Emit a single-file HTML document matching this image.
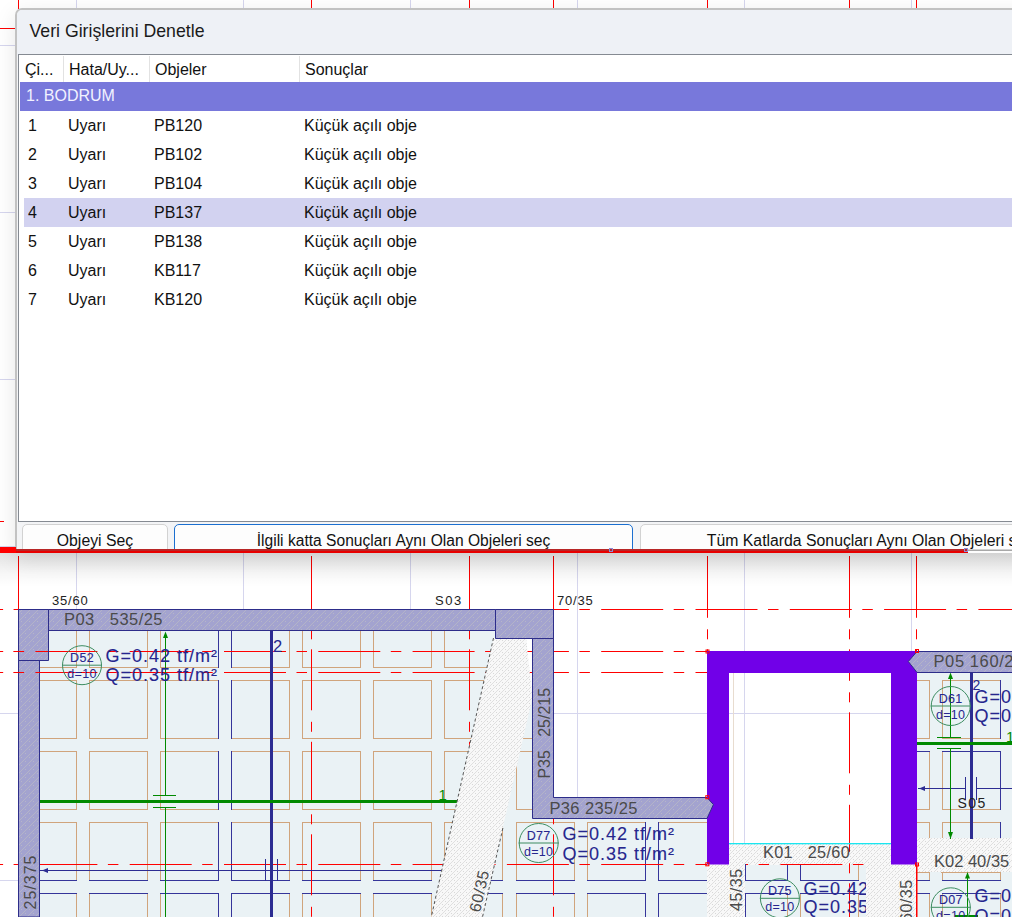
<!DOCTYPE html>
<html><head><meta charset="utf-8">
<style>
html,body{margin:0;padding:0;}
body{width:1012px;height:917px;overflow:hidden;position:relative;background:#fff;font-family:"Liberation Sans", sans-serif;}
svg text{font-family:"Liberation Sans", sans-serif;}
#shadowL{position:absolute;left:0;top:8px;width:15px;height:540px;background:linear-gradient(to right,rgba(0,0,0,0),rgba(0,0,0,0.035));}
#shadowB{position:absolute;left:0;top:553px;width:1012px;height:34px;background:linear-gradient(to bottom,rgba(0,0,0,0.11),rgba(0,0,0,0.03) 60%,rgba(0,0,0,0));}
#dlg{position:absolute;left:15px;top:8px;width:1200px;height:545px;background:#f3f4f6;border-left:2px solid #c2c2c2;border-top:2px solid #c2c2c2;border-top-left-radius:7px;box-sizing:border-box;overflow:hidden;box-shadow:0 6px 22px rgba(0,0,0,0.10);}
#title{position:absolute;left:0;top:0;right:0;height:46px;background:#eef1f6;}
#title span{position:absolute;left:12.5px;top:11px;font-size:17.7px;color:#1b1b1b;white-space:nowrap;}
#grid{position:absolute;left:1px;top:44px;width:1300px;height:468px;background:#fff;border:1px solid #858a92;box-sizing:border-box;}
.hdr{position:absolute;left:0;top:0;height:27px;width:100%;}
.hdr span,.row span{position:absolute;top:6px;font-size:16px;color:#111;white-space:nowrap;}
.sep{position:absolute;top:1px;width:1px;height:26px;background:#e2e2e2;}
.grp{position:absolute;left:1px;top:27px;height:29px;width:100%;background:#7878db;}
.grp span{position:absolute;left:6px;top:5px;font-size:16px;color:#f2f2ff;white-space:nowrap;}
.row{position:absolute;left:5px;height:29px;width:100%;}
.row.sel{background:#d2d2f0;}
.btn{position:absolute;top:514px;height:41px;background:#fdfdfd;border:1px solid #d2d2d2;border-radius:5px;box-sizing:border-box;font-size:15.8px;color:#111;text-align:center;white-space:nowrap;}
.btn span{position:absolute;left:0;right:0;top:7px;}
.btn.focus{border:1px solid #1b6fd0;}
</style></head><body>
<svg width="1012" height="917" viewBox="0 0 1012 917" style="position:absolute;left:0;top:0">
<defs>
<pattern id="wh" patternUnits="userSpaceOnUse" width="8" height="8"><rect width="8" height="8" fill="#a3a3cf"/><path d="M-1,9 L9,-1 M-1,1 L1,-1 M7,9 L9,7" stroke="#b9b9c6" stroke-width="0.9" opacity="0.85"/><rect x="1" y="1" width="1" height="1" fill="#b6b6c8"/><rect x="5" y="5" width="1" height="1" fill="#b6b6c8"/></pattern>
<pattern id="gh" patternUnits="userSpaceOnUse" width="6" height="6"><rect width="6" height="6" fill="#f8f8f8"/><path d="M-1,7 L7,-1 M-1,1 L1,-1 M5,7 L7,5" stroke="#d4d4d4" stroke-width="0.7"/><rect x="1" y="1" width="1" height="1" fill="#d8d8d8"/><rect x="4" y="4" width="1" height="1" fill="#d8d8d8"/></pattern>
<clipPath id="cA"><polygon points="40,631 495,631 495,639 533,639 533,819 707,819 707,917 40,917"/></clipPath>
<clipPath id="cB"><rect x="917" y="673" width="95" height="166"/></clipPath>
<clipPath id="cC"><rect x="745" y="865" width="121" height="52"/></clipPath>
<clipPath id="cC2"><rect x="745" y="865" width="121" height="52"/></clipPath>
<clipPath id="cD"><rect x="917" y="872" width="95" height="45"/></clipPath>
</defs>
<rect width="1012" height="917" fill="#fff"/>
<rect x="76" y="0" width="1" height="917" fill="#d6d6ee"/>
<rect x="243" y="0" width="1" height="917" fill="#d6d6ee"/>
<rect x="410" y="0" width="1" height="917" fill="#d6d6ee"/>
<rect x="577" y="0" width="1" height="917" fill="#d6d6ee"/>
<rect x="744" y="0" width="1" height="917" fill="#d6d6ee"/>
<rect x="911" y="0" width="1" height="917" fill="#d6d6ee"/>
<rect x="0" y="45" width="1012" height="1" fill="#d6d6ee"/>
<rect x="0" y="212" width="1012" height="1" fill="#d6d6ee"/>
<rect x="0" y="379" width="1012" height="1" fill="#d6d6ee"/>
<rect x="0" y="546" width="1012" height="1" fill="#d6d6ee"/>
<rect x="0" y="713" width="1012" height="1" fill="#d6d6ee"/>
<rect x="0" y="880" width="1012" height="1" fill="#d6d6ee"/>
<rect x="18" y="0" width="1" height="9" fill="#ff0000"/>
<rect x="18" y="556" width="1" height="53" fill="#ff0000"/>
<rect x="311" y="0" width="1" height="9" fill="#ff0000"/>
<rect x="311" y="556" width="1" height="53" fill="#ff0000"/>
<rect x="469" y="0" width="1" height="9" fill="#ff0000"/>
<rect x="469" y="556" width="1" height="53" fill="#ff0000"/>
<rect x="553" y="0" width="1" height="9" fill="#ff0000"/>
<rect x="553" y="556" width="1" height="53" fill="#ff0000"/>
<rect x="707" y="0" width="1" height="9" fill="#ff0000"/>
<rect x="707" y="556" width="1" height="53" fill="#ff0000"/>
<rect x="849" y="0" width="1" height="9" fill="#ff0000"/>
<rect x="849" y="556" width="1" height="53" fill="#ff0000"/>
<rect x="916" y="0" width="1" height="9" fill="#ff0000"/>
<rect x="916" y="556" width="1" height="53" fill="#ff0000"/>
<rect x="0" y="28" width="16" height="1" fill="#ff0000"/>
<rect x="0" y="521" width="4" height="1" fill="#ff0000"/>
<g clip-path="url(#cA)">
<rect x="40" y="630" width="667" height="287" fill="#eaf2f5"/>
<path d="M18,609.5H77M18,667.5H77M18.5,609V668M76.5,609V668M18,680.5H77M18,738.5H77M18.5,680V739M76.5,680V739M18,751.5H77M18,809.5H77M18.5,751V810M76.5,751V810M18,822.5H77M18.5,822V881M76.5,822V881M18,951.5H77M18.5,893V952M76.5,893V952M89,609.5H148M89,667.5H148M89.5,609V668M147.5,609V668M89,680.5H148M89,738.5H148M89.5,680V739M147.5,680V739M89,751.5H148M89,809.5H148M89.5,751V810M147.5,751V810M89,822.5H148M89.5,822V881M147.5,822V881M89,951.5H148M89.5,893V952M147.5,893V952M160,609.5H219M160,667.5H219M160.5,609V668M160,680.5H219M160,738.5H219M160.5,680V739M160,751.5H219M160,809.5H219M160.5,751V810M160,822.5H219M160.5,822V881M160,951.5H219M160.5,893V952M231,609.5H290M231,667.5H290M289.5,609V668M231,680.5H290M231,738.5H290M289.5,680V739M231,751.5H290M231,809.5H290M289.5,751V810M231,822.5H290M289.5,822V881M231,951.5H290M289.5,893V952M302,609.5H361M302,667.5H361M302.5,609V668M360.5,609V668M302,680.5H361M302,738.5H361M302.5,680V739M360.5,680V739M302,751.5H361M302,809.5H361M302.5,751V810M360.5,751V810M302,822.5H361M302.5,822V881M360.5,822V881M302,951.5H361M302.5,893V952M360.5,893V952M373,609.5H432M373,667.5H432M373.5,609V668M431.5,609V668M373,680.5H432M373,738.5H432M373.5,680V739M431.5,680V739M373,751.5H432M373,809.5H432M373.5,751V810M431.5,751V810M373,822.5H432M373.5,822V881M431.5,822V881M373,951.5H432M373.5,893V952M431.5,893V952M444,609.5H503M444,667.5H503M444.5,609V668M502.5,609V668M444,680.5H503M444,738.5H503M444.5,680V739M502.5,680V739M444,751.5H503M444,809.5H503M444.5,751V810M502.5,751V810M444,822.5H503M444.5,822V881M502.5,822V881M444,951.5H503M444.5,893V952M502.5,893V952M516,609.5H575M516,667.5H575M516.5,609V668M574.5,609V668M516,680.5H575M516,738.5H575M516.5,680V739M574.5,680V739M516,751.5H575M516,809.5H575M516.5,751V810M574.5,751V810M516,822.5H575M516.5,822V881M574.5,822V881M516,951.5H575M516.5,893V952M574.5,893V952M587,609.5H646M587,667.5H646M587.5,609V668M645.5,609V668M587,680.5H646M587,738.5H646M587.5,680V739M645.5,680V739M587,751.5H646M587,809.5H646M587.5,751V810M645.5,751V810M587,822.5H646M587.5,822V881M587,951.5H646M587.5,893V952M658,609.5H717M658,667.5H717M658.5,609V668M716.5,609V668M658,680.5H717M658,738.5H717M658.5,680V739M716.5,680V739M658,751.5H717M658,809.5H717M658.5,751V810M716.5,751V810M658,822.5H717M716.5,822V881M658,951.5H717M716.5,893V952" stroke="#d0a47c" stroke-width="1" fill="none"/>
<path d="M18,880.5H77M18,893.5H77M89,880.5H148M89,893.5H148M218.5,609V668M218.5,680V739M218.5,751V810M160,880.5H219M218.5,822V881M160,893.5H219M218.5,893V952M231.5,609V668M231.5,680V739M231.5,751V810M231,880.5H290M231.5,822V881M231,893.5H290M231.5,893V952M302,880.5H361M302,893.5H361M373,880.5H432M373,893.5H432M444,880.5H503M444,893.5H503M516,880.5H575M516,893.5H575M587,880.5H646M645.5,822V881M587,893.5H646M645.5,893V952M658,880.5H717M658.5,822V881M658,893.5H717M658.5,893V952" stroke="#35359a" stroke-width="1" fill="none"/>
</g>
<g clip-path="url(#cB)">
<rect x="917" y="672" width="95" height="167" fill="#eaf2f5"/>
<path d="M871,680.5H930M871,738.5H930M871.5,680V739M929.5,680V739M871,809.5H930M871.5,751V810M929.5,751V810M871,822.5H930M871,880.5H930M871.5,822V881M929.5,822V881M942,680.5H1001M942,738.5H1001M942.5,680V739M942,809.5H1001M942.5,751V810M942,822.5H1001M942,880.5H1001M942.5,822V881" stroke="#d0a47c" stroke-width="1" fill="none"/>
<path d="M871,751.5H930M1000.5,680V739M942,751.5H1001M1000.5,751V810M1000.5,822V881" stroke="#35359a" stroke-width="1" fill="none"/>
</g>
<g clip-path="url(#cC)">
<rect x="745" y="864" width="121" height="53" fill="#eaf2f5"/>
<path d="M729,822.5H788M729,951.5H788M787.5,893V952M800,822.5H859M858.5,822V881M800,951.5H859M800.5,893V952M858.5,893V952" stroke="#d0a47c" stroke-width="1" fill="none"/>
<path d="M729,880.5H788M729.5,822V881M787.5,822V881M729,893.5H788M729.5,893V952M800,880.5H859M800.5,822V881M800,893.5H859" stroke="#35359a" stroke-width="1" fill="none"/>
</g>
<g clip-path="url(#cD)">
<rect x="917" y="872" width="95" height="45" fill="#eaf2f5"/>
<path d="M871,822.5H930M871.5,822V881M929.5,822V881M871,951.5H930M871.5,893V952M929.5,893V952M942,822.5H1001M942.5,822V881M1000.5,822V881M942,951.5H1001M942.5,893V952M1000.5,893V952" stroke="#d0a47c" stroke-width="1" fill="none"/>
<path d="M871,880.5H930M871,893.5H930M942,880.5H1001M942,893.5H1001" stroke="#35359a" stroke-width="1" fill="none"/>
</g>
<polygon points="526,638 533,638 533,701 531.5,701" fill="#fff"/>
<line x1="0" y1="609.5" x2="1012" y2="609.5" stroke="#ff0000" stroke-width="1" stroke-dasharray="62 10.5 10.5 11.3" stroke-dashoffset="58.9"/>
<line x1="0" y1="651.5" x2="1012" y2="651.5" stroke="#ff0000" stroke-width="1" stroke-dasharray="62 10.5 10.5 11.3" stroke-dashoffset="58.9"/>
<line x1="0" y1="672.5" x2="1012" y2="672.5" stroke="#ff0000" stroke-width="1" stroke-dasharray="62 10.5 10.5 11.3" stroke-dashoffset="58.9"/>
<line x1="0" y1="864.5" x2="1012" y2="864.5" stroke="#ff0000" stroke-width="1" stroke-dasharray="62 10.5 10.5 11.3" stroke-dashoffset="58.9"/>
<line x1="311.5" y1="609" x2="311.5" y2="917" stroke="#ff0000" stroke-width="1" stroke-dasharray="61 11.5 10 10" stroke-dashoffset="52.2"/>
<line x1="469.5" y1="609" x2="469.5" y2="917" stroke="#ff0000" stroke-width="1" stroke-dasharray="61 11.5 10 10" stroke-dashoffset="52.2"/>
<line x1="553.5" y1="609" x2="553.5" y2="917" stroke="#ff0000" stroke-width="1" stroke-dasharray="61 11.5 10 10" stroke-dashoffset="52.2"/>
<line x1="707.5" y1="609" x2="707.5" y2="917" stroke="#ff0000" stroke-width="1" stroke-dasharray="61 11.5 10 10" stroke-dashoffset="52.2"/>
<line x1="849.5" y1="609" x2="849.5" y2="917" stroke="#ff0000" stroke-width="1" stroke-dasharray="61 11.5 10 10" stroke-dashoffset="52.2"/>
<line x1="916.5" y1="609" x2="916.5" y2="651" stroke="#ff0000" stroke-width="1" stroke-dasharray="61 11.5 10 10" stroke-dashoffset="52.2"/>
<rect x="729" y="673" width="162" height="170" fill="#fff"/>
<rect x="744" y="673" width="1" height="170" fill="#d6d6ee"/>
<rect x="729" y="713" width="162" height="1" fill="#d6d6ee"/>
<line x1="849.5" y1="672" x2="849.5" y2="843" stroke="#ff0000" stroke-width="1" stroke-dasharray="61 11.5 10 10" stroke-dashoffset="52.2"/>
<rect x="733" y="673" width="1" height="170" fill="#e8dccf"/>
<rect x="553" y="673" width="154" height="124" fill="#fff"/>
<rect x="577" y="673" width="1" height="124" fill="#d6d6ee"/>
<rect x="553" y="713" width="154" height="1" fill="#d6d6ee"/>
<line x1="707.5" y1="651" x2="707.5" y2="797" stroke="#ff0000" stroke-width="1" stroke-dasharray="61 11.5 10 10" stroke-dashoffset="52.2"/>
<rect x="270" y="630" width="3" height="287" fill="#2c2c92"/>
<rect x="40" y="870" width="402" height="1" fill="#2c2c92"/>
<polygon points="42,870.5 48,868 48,873" fill="#2c2c92"/>
<rect x="265" y="859" width="1" height="22" fill="#2c2c92"/>
<rect x="277" y="859" width="1" height="22" fill="#2c2c92"/>
<rect x="40" y="800" width="418" height="3" fill="#008a00"/>
<rect x="165" y="633" width="1" height="162" fill="#008a00"/>
<rect x="165" y="808" width="1" height="109" fill="#008a00"/>
<rect x="153" y="795" width="23" height="1" fill="#008a00"/>
<rect x="153" y="807" width="23" height="1" fill="#008a00"/>
<polygon points="165.5,631.5 163,638 168,638" fill="#008a00"/>
<polygon points="493.5,638 526,638 532.5,697 482.5,917 431.3,917" fill="url(#gh)"/>
<line x1="493.5" y1="638" x2="431.3" y2="917" stroke="#555" stroke-width="1" stroke-dasharray="3 2.5"/>
<line x1="502.9" y1="828" x2="482.5" y2="917" stroke="#555" stroke-width="1" stroke-dasharray="3 2.5"/>
<circle cx="82" cy="665.2" r="19.5" fill="none" stroke="#3c8c60" stroke-width="1"/>
<line x1="62" y1="665.2" x2="102" y2="665.2" stroke="#3c8c60" stroke-width="1"/>
<text x="82" y="661.7" font-size="12.5" fill="#26268e" stroke="#26268e" stroke-width="0.1" text-anchor="middle" letter-spacing="0.3">D52</text>
<text x="82" y="677.7" font-size="12.5" fill="#26268e" text-anchor="middle" letter-spacing="0.3">d=10</text>
<text x="105.5" y="661.8" font-size="18" fill="#26268e" stroke="#26268e" stroke-width="0.1" letter-spacing="1">G=0.42 tf/m²</text>
<text x="105.5" y="681.2" font-size="18" fill="#26268e" stroke="#26268e" stroke-width="0.1" letter-spacing="1">Q=0.35 tf/m²</text>
<circle cx="538.7" cy="843" r="19.5" fill="none" stroke="#3c8c60" stroke-width="1"/>
<line x1="518.7" y1="843" x2="558.7" y2="843" stroke="#3c8c60" stroke-width="1"/>
<text x="538.7" y="839.5" font-size="12.5" fill="#26268e" stroke="#26268e" stroke-width="0.1" text-anchor="middle" letter-spacing="0.3">D77</text>
<text x="538.7" y="855.5" font-size="12.5" fill="#26268e" text-anchor="middle" letter-spacing="0.3">d=10</text>
<text x="562.5" y="839.7" font-size="18" fill="#26268e" stroke="#26268e" stroke-width="0.1" letter-spacing="1">G=0.42 tf/m²</text>
<text x="562.5" y="860.3" font-size="18" fill="#26268e" stroke="#26268e" stroke-width="0.1" letter-spacing="1">Q=0.35 tf/m²</text>
<rect x="707" y="843" width="305" height="74" fill="url(#gh)"/>
<rect x="917" y="838" width="95" height="6" fill="url(#gh)"/>
<g clip-path="url(#cC)">
<rect x="745" y="864" width="121" height="53" fill="#eaf2f5"/>
<path d="M729,822.5H788M729,951.5H788M787.5,893V952M800,822.5H859M858.5,822V881M800,951.5H859M800.5,893V952M858.5,893V952" stroke="#d0a47c" stroke-width="1" fill="none"/>
<path d="M729,880.5H788M729.5,822V881M787.5,822V881M729,893.5H788M729.5,893V952M800,880.5H859M800.5,822V881M800,893.5H859" stroke="#35359a" stroke-width="1" fill="none"/>
</g>
<line x1="745" y1="864.5" x2="866" y2="864.5" stroke="#ff0000" stroke-width="1" stroke-dasharray="62 10.5 10.5 11.3" stroke-dashoffset="58.9"/>
<path d="M745.5,864V881M745.5,893V917" stroke="#35359a" stroke-width="1"/>
<line x1="849.5" y1="843" x2="849.5" y2="917" stroke="#ff0000" stroke-width="1" stroke-dasharray="61 11.5 10 10" stroke-dashoffset="52.2"/>
<g clip-path="url(#cC)">
<circle cx="779.9" cy="898.3" r="19.5" fill="none" stroke="#3c8c60" stroke-width="1"/>
<line x1="759.9" y1="898.3" x2="799.9" y2="898.3" stroke="#3c8c60" stroke-width="1"/>
<text x="779.9" y="894.8" font-size="12.5" fill="#26268e" stroke="#26268e" stroke-width="0.1" text-anchor="middle" letter-spacing="0.3">D75</text>
<text x="779.9" y="910.8" font-size="12.5" fill="#26268e" text-anchor="middle" letter-spacing="0.3">d=10</text>
<text x="803.5" y="894.7" font-size="18" fill="#26268e" stroke="#26268e" stroke-width="0.1" letter-spacing="1">G=0.42 tf/m²</text>
<text x="803.5" y="913.4" font-size="18" fill="#26268e" stroke="#26268e" stroke-width="0.1" letter-spacing="1">Q=0.35 tf/m²</text>
</g>
<g clip-path="url(#cD)">
<rect x="917" y="872" width="95" height="45" fill="#eaf2f5"/>
<path d="M871,822.5H930M871.5,822V881M929.5,822V881M871,951.5H930M871.5,893V952M929.5,893V952M942,822.5H1001M942.5,822V881M1000.5,822V881M942,951.5H1001M942.5,893V952M1000.5,893V952" stroke="#d0a47c" stroke-width="1" fill="none"/>
<path d="M871,880.5H930M871,893.5H930M942,880.5H1001M942,893.5H1001" stroke="#35359a" stroke-width="1" fill="none"/>
</g>
<path d="M917,872.5H929M941,872.5H1001" stroke="#d0a47c" stroke-width="1"/>
<rect x="916" y="864" width="1.5" height="53" fill="#ff0000"/>
<rect x="970" y="672" width="3" height="167" fill="#2c2c92"/>
<rect x="918" y="788" width="47" height="1" fill="#2c2c92"/>
<rect x="977" y="788" width="35" height="1" fill="#2c2c92"/>
<polygon points="919,788.5 925,786 925,791" fill="#2c2c92"/>
<rect x="965" y="777" width="1" height="23" fill="#2c2c92"/>
<rect x="976" y="777" width="1" height="23" fill="#2c2c92"/>
<rect x="917" y="742" width="95" height="3" fill="#008a00"/>
<rect x="950" y="674" width="1" height="63" fill="#008a00"/>
<rect x="950" y="748" width="1" height="91" fill="#008a00"/>
<rect x="937" y="737" width="24" height="1" fill="#008a00"/>
<rect x="937" y="748" width="24" height="1" fill="#008a00"/>
<polygon points="950.5,672.5 948,679 953,679" fill="#008a00"/>
<polygon points="950.5,839 948,832 953,832" fill="#008a00"/>
<circle cx="950.7" cy="706" r="19.5" fill="none" stroke="#3c8c60" stroke-width="1"/>
<line x1="930.7" y1="706" x2="970.7" y2="706" stroke="#3c8c60" stroke-width="1"/>
<text x="950.7" y="702.5" font-size="12.5" fill="#26268e" stroke="#26268e" stroke-width="0.1" text-anchor="middle" letter-spacing="0.3">D61</text>
<text x="950.7" y="718.5" font-size="12.5" fill="#26268e" text-anchor="middle" letter-spacing="0.3">d=10</text>
<text x="974.5" y="703" font-size="18" fill="#26268e" stroke="#26268e" stroke-width="0.1" letter-spacing="1">G=0.42 tf/m²</text>
<text x="974.5" y="722" font-size="18" fill="#26268e" stroke="#26268e" stroke-width="0.1" letter-spacing="1">Q=0.35 tf/m²</text>
<rect x="967" y="873" width="1" height="44" fill="#008a00"/>
<polygon points="967.5,872 965,878.5 970,878.5" fill="#008a00"/>
<rect x="955" y="915" width="23" height="2" fill="#008a00"/>
<circle cx="950.8" cy="907.3" r="19.5" fill="none" stroke="#3c8c60" stroke-width="1"/>
<line x1="930.8" y1="907.3" x2="970.8" y2="907.3" stroke="#3c8c60" stroke-width="1"/>
<text x="950.8" y="903.8" font-size="12.5" fill="#26268e" stroke="#26268e" stroke-width="0.1" text-anchor="middle" letter-spacing="0.3">D07</text>
<text x="950.8" y="919.8" font-size="12.5" fill="#26268e" text-anchor="middle" letter-spacing="0.3">d=10</text>
<text x="974.5" y="902.4" font-size="18" fill="#26268e" stroke="#26268e" stroke-width="0.1" letter-spacing="1">G=0.42 tf/m²</text>
<text x="974.5" y="921.5" font-size="18" fill="#26268e" stroke="#26268e" stroke-width="0.1" letter-spacing="1">Q=0.35 tf/m²</text>
<rect x="707" y="651" width="210" height="22" fill="#7100e8"/>
<rect x="707" y="651" width="22" height="213.5" fill="#7100e8"/>
<rect x="891" y="651" width="26" height="213.5" fill="#7100e8"/>
<rect x="729" y="843" width="162" height="1.3" fill="#19e6f0"/>
<polygon points="18.5,609.5 495.5,609.5 495.5,630.5 39.5,630.5 39.5,917 18.5,917" fill="url(#wh)" stroke="#2d2d8a" stroke-width="1"/>
<polygon points="18.5,609.5 48.5,609.5 48.5,660.5 18.5,660.5" fill="url(#wh)" stroke="#2d2d8a" stroke-width="1"/>
<polygon points="495.5,609.5 553.5,609.5 553.5,638.5 495.5,638.5" fill="url(#wh)" stroke="#2d2d8a" stroke-width="1"/>
<polygon points="532.5,638.5 553.5,638.5 553.5,797.5 707,797.5 713.4,804.5 707,818.5 532.5,818.5" fill="url(#wh)" stroke="#2d2d8a" stroke-width="1"/>
<polygon points="917,651.5 1013,651.5 1013,672.5 917,672.5 908.3,661.5" fill="url(#wh)" stroke="#2d2d8a" stroke-width="1"/>
<line x1="0" y1="651.5" x2="48" y2="651.5" stroke="#ff0000" stroke-width="1" stroke-dasharray="62 10.5 10.5 11.3" stroke-dashoffset="58.9"/>
<line x1="0" y1="672.5" x2="48" y2="672.5" stroke="#ff0000" stroke-width="1" stroke-dasharray="62 10.5 10.5 11.3" stroke-dashoffset="58.9"/>
<text x="64" y="625.4" font-size="16.5" fill="#4a4a4a" xml:space="preserve" letter-spacing="0.45">P03   535/25</text>
<text x="549.4" y="813.8" font-size="16.5" fill="#4a4a4a" letter-spacing="0.4">P36 235/25</text>
<text x="933.5" y="667" font-size="16.5" fill="#4a4a4a" letter-spacing="0.6">P05 160/25</text>
<text x="763" y="858.3" font-size="16.3" fill="#4a4a4a" xml:space="preserve" letter-spacing="0.35">K01   25/60</text>
<text x="934" y="867.2" font-size="16.5" fill="#4a4a4a" >K02 40/35</text>
<text x="52" y="604.8" font-size="13" fill="#222" letter-spacing="0.8">35/60</text>
<text x="435" y="604.7" font-size="13" fill="#222" letter-spacing="1.5">S03</text>
<text x="557" y="605" font-size="13" fill="#222" letter-spacing="0.8">70/35</text>
<text x="957.5" y="808.3" font-size="14" fill="#222" letter-spacing="1.5">S05</text>
<text x="273" y="651.5" font-size="16.5" fill="#26268e" >2</text>
<text x="972.5" y="690" font-size="14" fill="#26268e" >2</text>
<text x="438.5" y="799.7" font-size="15" fill="#008a00" >1</text>
<text x="1006" y="742" font-size="15" fill="#008a00" >1</text>
<text x="0" y="0" font-size="16" fill="#4a4a4a" transform="translate(549.5,778.6) rotate(-90)" xml:space="preserve">P35   25/215</text>
<text x="0" y="0" font-size="16" fill="#4a4a4a" transform="translate(35.5,909.5) rotate(-90)" letter-spacing="1">25/375</text>
<text x="0" y="0" font-size="16" fill="#4a4a4a" transform="translate(741.5,911) rotate(-90)" letter-spacing="0.5">45/35</text>
<text x="0" y="0" font-size="16" fill="#4a4a4a" transform="translate(911.5,922) rotate(-90)" letter-spacing="0.5">60/35</text>
<text x="0" y="0" font-size="16" fill="#4a4a4a" transform="translate(480,913) rotate(-77.3)" letter-spacing="0.5">60/35</text>
<rect x="705.8" y="795.7" width="3" height="3" fill="none" stroke="#ff0000" stroke-width="1"/>
<rect x="705.8" y="862.8" width="3" height="3" fill="none" stroke="#ff0000" stroke-width="1"/>
<rect x="915.5" y="649.5" width="3" height="3" fill="none" stroke="#ff0000" stroke-width="1"/>
<rect x="915.5" y="863.0" width="3" height="3" fill="none" stroke="#ff0000" stroke-width="1"/>
<rect x="706.0" y="650.0" width="3" height="3" fill="none" stroke="#ff0000" stroke-width="1"/>
</svg>
<div id="shadowB"></div>
<div id="dlg">
 <div id="title"><span>Veri Girişlerini Denetle</span></div>
 <div id="grid">
  <div class="hdr"><span style="left:6px">Çi...</span><span style="left:50px">Hata/Uy...</span><span style="left:136px">Objeler</span><span style="left:286px">Sonuçlar</span>
   <div class="sep" style="left:44px"></div><div class="sep" style="left:130px"></div><div class="sep" style="left:280px"></div></div>
  <div class="grp"><span>1. BODRUM</span></div>
  <div class="row" style="top:56px"><span style="left:4px">1</span><span style="left:44px">Uyarı</span><span style="left:130px">PB120</span><span style="left:280px">Küçük açılı obje</span></div><div class="row" style="top:85px"><span style="left:4px">2</span><span style="left:44px">Uyarı</span><span style="left:130px">PB102</span><span style="left:280px">Küçük açılı obje</span></div><div class="row" style="top:114px"><span style="left:4px">3</span><span style="left:44px">Uyarı</span><span style="left:130px">PB104</span><span style="left:280px">Küçük açılı obje</span></div><div class="row sel" style="top:143px"><span style="left:4px">4</span><span style="left:44px">Uyarı</span><span style="left:130px">PB137</span><span style="left:280px">Küçük açılı obje</span></div><div class="row" style="top:172px"><span style="left:4px">5</span><span style="left:44px">Uyarı</span><span style="left:130px">PB138</span><span style="left:280px">Küçük açılı obje</span></div><div class="row" style="top:201px"><span style="left:4px">6</span><span style="left:44px">Uyarı</span><span style="left:130px">KB117</span><span style="left:280px">Küçük açılı obje</span></div><div class="row" style="top:230px"><span style="left:4px">7</span><span style="left:44px">Uyarı</span><span style="left:130px">KB120</span><span style="left:280px">Küçük açılı obje</span></div>
 </div>
 <div class="btn" style="left:5px;width:146px"><span>Objeyi Seç</span></div>
 <div class="btn focus" style="left:157px;width:459px;font-size:15.6px"><span>İlgili katta Sonuçları Aynı Olan Objeleri seç</span></div>
 <div class="btn" style="left:623px;width:460px"><span>Tüm Katlarda Sonuçları Aynı Olan Objeleri seç</span></div>
</div>
<svg width="1012" height="30" style="position:absolute;left:0;top:540px">
 <rect x="0" y="7" width="16" height="6" fill="#ff0000"/>
 <rect x="16" y="9" width="952" height="2" fill="#b82626"/>
 <rect x="16" y="11" width="952" height="2" fill="#e80000"/>
 <rect x="968" y="9.5" width="44" height="1.5" fill="#a8a8a8"/>
 <rect x="964.5" y="8.5" width="3" height="3" fill="none" stroke="#8c8cd8" stroke-width="1"/>
 <rect x="609.5" y="8.5" width="3" height="3" fill="none" stroke="#8c8cd8" stroke-width="1"/>
</svg>
</body></html>
